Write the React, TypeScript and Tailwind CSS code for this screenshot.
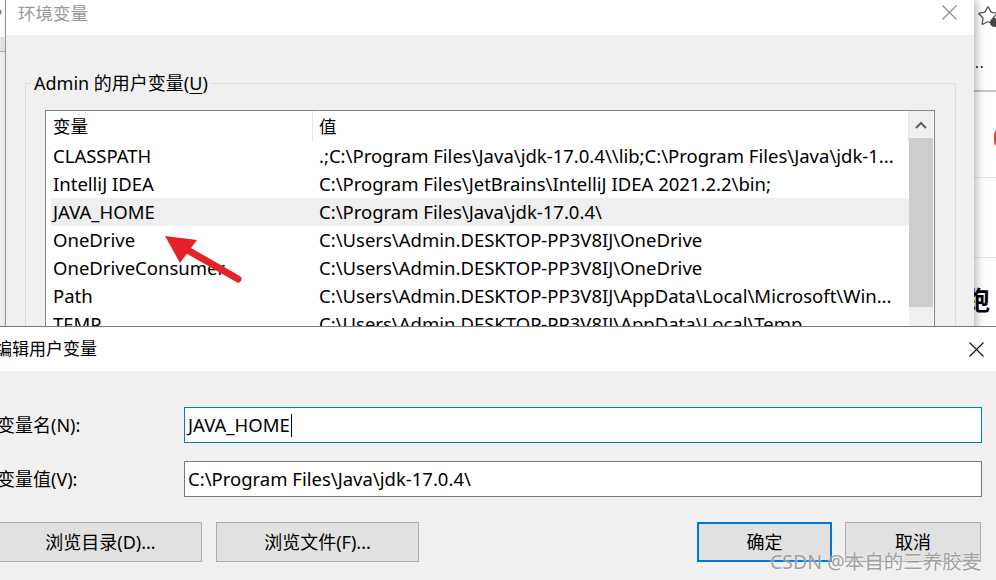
import { Star } from 'lucide-react'

const rows: [string, string][] = [
  ['CLASSPATH', '.;C:\\Program Files\\Java\\jdk-17.0.4\\\\lib;C:\\Program Files\\Java\\jdk-1...'],
  ['IntelliJ IDEA', 'C:\\Program Files\\JetBrains\\IntelliJ IDEA 2021.2.2\\bin;'],
  ['JAVA_HOME', 'C:\\Program Files\\Java\\jdk-17.0.4\\'],
  ['OneDrive', 'C:\\Users\\Admin.DESKTOP-PP3V8IJ\\OneDrive'],
  ['OneDriveConsumer', 'C:\\Users\\Admin.DESKTOP-PP3V8IJ\\OneDrive'],
  ['Path', 'C:\\Users\\Admin.DESKTOP-PP3V8IJ\\AppData\\Local\\Microsoft\\Win...'],
  ['TEMP', 'C:\\Users\\Admin.DESKTOP-PP3V8IJ\\AppData\\Local\\Temp'],
  ['TMP', 'C:\\Users\\Admin.DESKTOP-PP3V8IJ\\AppData\\Local\\Temp'],
]

function CloseX({ color, size }: { color: string; size: number }) {
  return (
    <svg width={size} height={size} viewBox="0 0 15 15">
      <path d="M0.5 0.5 L14.5 14.5 M14.5 0.5 L0.5 14.5" stroke={color} strokeWidth="1.1" fill="none" />
    </svg>
  )
}

export default function App() {
  return (
    <div className="relative w-[996px] h-[580px] overflow-hidden bg-white text-black font-['Segoe_UI','Noto_Sans','Noto_Sans_CJK_SC',sans-serif]">
      {/* 左侧背景窗口残片 */}
      <div className="absolute left-0 top-0 w-[6px] h-full bg-[#f0f0f0] border-r border-[#a0a0a0] overflow-hidden">
        <div className="h-[37px] bg-white text-[18px] text-[#777] leading-[30px] -ml-[6px]">?</div>
        <div className="h-[15px] bg-[#e6e6e6] border-b border-[#b0b0b0]" />
      </div>

      {/* 右侧浏览器残片 */}
      <div className="absolute left-[974px] top-0 w-[22px] h-full bg-white overflow-hidden">
        <div className="relative h-[92px] border-b-2 border-[#c4c4c4]">
          <Star size={22} strokeWidth={1.4} className="absolute left-[3px] top-[5px] text-[#555]" />
          <div className="absolute left-[16px] top-[18px] w-[9px] h-[9px] rounded-full bg-[#444]" />
          <div className="absolute left-[1px] top-[56px] text-[14px] leading-none tracking-[1px]">..</div>
        </div>
        <div className="relative h-[86px] border-b border-[#e4e4e4]">
          <div className="absolute left-[20px] top-[36px] w-[14px] h-[20px] rounded-full bg-[#e8462e]" />
        </div>
        <div className="h-[80px] border-b border-[#e4e4e4]" />
        <div className="-ml-[10px] mt-[28px] text-[26px] font-bold leading-none font-['Noto_Sans_CJK_SC',sans-serif]">跑</div>
      </div>

      {/* 环境变量 窗口 */}
      <div className="absolute left-[6px] top-0 w-[968px] h-[420px] bg-[#f0f0f0] shadow-[3px_0_8px_rgba(0,0,0,0.28)]">
        <div className="relative h-[35px] bg-white flex items-start">
          <span className="ml-[12px] mt-[1px] text-[17.5px] leading-[24px] text-[#999] font-['Microsoft_YaHei','Noto_Sans_CJK_SC',sans-serif]">环境变量</span>
          <div className="absolute left-[936px] top-[5px]">
            <CloseX color="#8c8c8c" size={15} />
          </div>
        </div>

        <div className="relative mt-[48px] ml-[19px] w-[931px] h-[320px] border border-[#dcdcdc]">
          <span className="absolute left-[5px] -top-[13px] px-[3px] bg-[#f0f0f0] text-[18px] leading-[24px] font-['Segoe_UI','Noto_Sans','Microsoft_YaHei','Noto_Sans_CJK_SC',sans-serif]">
            Admin 的用户变量(<span className="underline underline-offset-[3px]">U</span>)
          </span>

          <div className="mt-[26px] ml-[19px] w-[890px] h-[290px] border border-[#828790] bg-white flex">
            <div className="flex-1 min-w-0 flex flex-col">
              <div className="h-[31px] flex items-center text-[17.5px] shrink-0">
                <div className="w-[266px] shrink-0 pl-[7px] font-['Microsoft_YaHei','Noto_Sans_CJK_SC',sans-serif]">变量</div>
                <div className="self-stretch w-px bg-[#e5e5e5]" />
                <div className="flex-1 pl-[6px] font-['Microsoft_YaHei','Noto_Sans_CJK_SC',sans-serif]">值</div>
                <div className="self-stretch w-px bg-[#e5e5e5]" />
              </div>
              {rows.map(([name, value]) => (
                <div
                  key={name}
                  className={`h-[28px] ml-[5px] flex items-center text-[18.5px] whitespace-nowrap overflow-hidden shrink-0 ${name === 'JAVA_HOME' ? 'bg-[#efefef]' : ''}`}
                >
                  <div className="w-[268px] shrink-0 pl-[2px]">{name}</div>
                  <div className="flex-1 min-w-0 overflow-hidden">{value}</div>
                </div>
              ))}
            </div>
            <div className="w-[24px] shrink-0 mr-[1px] bg-[#f0f0f0] flex flex-col">
              <div className="h-[27px] flex items-center justify-center">
                <svg width="12" height="8" viewBox="0 0 12 8">
                  <path d="M1 7 L6 2 L11 7" stroke="#606060" strokeWidth="2" fill="none" />
                </svg>
              </div>
              <div className="h-[169px] bg-[#cdcdcd]" />
            </div>
          </div>
        </div>
      </div>

      {/* 红色箭头 */}
      <svg className="absolute left-0 top-0 pointer-events-none" width="996" height="580">
        <polygon points="165,236 197,240 180,263" fill="#e62129" />
        <line x1="184" y1="248" x2="238" y2="279" stroke="#e62129" strokeWidth="7" strokeLinecap="round" />
      </svg>

      {/* 编辑用户变量 对话框 */}
      <div className="absolute left-0 top-[326px] w-[996px] h-[254px] border-t border-[#7a7a7a] bg-[#f0f0f0] overflow-hidden font-['Microsoft_YaHei','Segoe_UI','Noto_Sans','Noto_Sans_CJK_SC',sans-serif]">
        <div className="h-[44px] bg-white flex items-center justify-between">
          <span className="-ml-[5px] text-[17px]">编辑用户变量</span>
          <div className="mr-[12px]">
            <CloseX color="#111" size={15} />
          </div>
        </div>

        <div className="mt-[36px] flex items-center">
          <div className="w-[184px] shrink-0 text-[18px]">
            <span className="-ml-[3px] block">变量名(N):</span>
          </div>
          <div className="w-[798px] h-[36px] border border-[#0078d7] bg-white flex items-center pl-[3px] text-[18.5px] font-['Segoe_UI','Noto_Sans',sans-serif]">
            JAVA_HOME
            <span className="inline-block w-px h-[23px] bg-black ml-[1px]" />
          </div>
        </div>

        <div className="mt-[18px] flex items-center">
          <div className="w-[184px] shrink-0 text-[18px]">
            <span className="-ml-[3px] block">变量值(V):</span>
          </div>
          <div className="w-[798px] h-[36px] border border-[#7a7a7a] bg-white flex items-center pl-[3px] text-[18.5px] font-['Segoe_UI','Noto_Sans',sans-serif]">
            C:\Program Files\Java\jdk-17.0.4\
          </div>
        </div>

        <div className="mt-[25px] flex items-center text-[18px]">
          <button className="-ml-[1px] w-[203px] h-[40px] bg-[#e1e1e1] border border-[#adadad]">浏览目录(D)...</button>
          <button className="ml-[14px] w-[203px] h-[40px] bg-[#e1e1e1] border border-[#adadad]">浏览文件(F)...</button>
          <button className="ml-[278px] w-[135px] h-[40px] bg-[#e1e1e1] border-2 border-[#0078d7]">确定</button>
          <button className="ml-[13px] w-[136px] h-[40px] bg-[#e1e1e1] border border-[#adadad]">取消</button>
        </div>
      </div>

      {/* 水印 */}
      <div className="absolute left-[770px] top-[549px] text-[19.5px] leading-[26px] text-[#8a8a8a]/80 [text-shadow:0_0_2px_rgba(255,255,255,0.9)] font-['Microsoft_YaHei','Noto_Sans','Noto_Sans_CJK_SC',sans-serif] whitespace-nowrap">
        CSDN @本自的三养胶麦
      </div>
    </div>
  )
}
